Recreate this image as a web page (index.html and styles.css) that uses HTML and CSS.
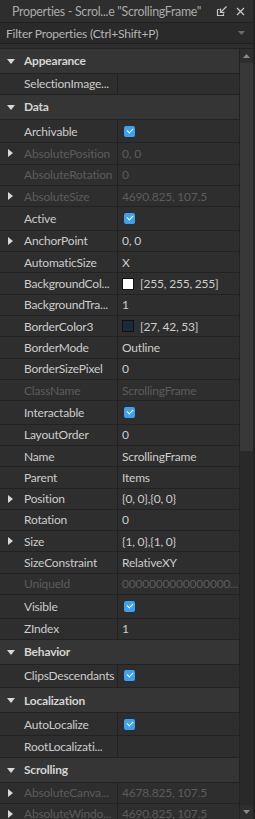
FILE: index.html
```html
<!DOCTYPE html>
<html lang="en">
<head>
    <meta charset="UTF-8">
    <title>Properties</title>
    <link rel="stylesheet" href="styles.css">
</head>
<body>
    <div class="panel">
        <div class="titlebar">
            <span class="title">Properties - Scrol...e "ScrollingFrame"</span>
            <svg class="tb-icon" width="12" height="12" viewBox="0 0 12 12">
                <path d="M1.5 4.5 V10.5 H7.5 V8.5 M1.5 4.5 H3.5" fill="none" stroke="#c8c8c8" stroke-width="1.2"/>
                <path d="M10.5 1.5 L5 7 M4.5 3.5 V7.5 H8.5" fill="none" stroke="#c8c8c8" stroke-width="1.2"/>
            </svg>
            <svg class="tb-icon" width="11" height="11" viewBox="0 0 11 11">
                <path d="M2 2 L9 9 M9 2 L2 9" stroke="#c8c8c8" stroke-width="1.3"/>
            </svg>
        </div>
        <div class="filter">
            <span>Filter Properties (Ctrl+Shift+P)</span>
            <svg width="7" height="4" viewBox="0 0 7 4"><path d="M0 0 H7 L3.5 4 Z" fill="#6a6a6a"/></svg>
        </div>
        <div class="body">
            <div class="list">
                <div class="group"><i class="down"></i>Appearance</div>
                <div class="row"><div class="name">SelectionImage...</div><div class="value"></div></div>

                <div class="group"><i class="down"></i>Data</div>
                <div class="row check"><div class="name">Archivable</div><div class="value"><b class="box"></b></div></div>
                <div class="row off"><div class="name"><i class="right"></i>AbsolutePosition</div><div class="value">0, 0</div></div>
                <div class="row off"><div class="name">AbsoluteRotation</div><div class="value">0</div></div>
                <div class="row off"><div class="name"><i class="right"></i>AbsoluteSize</div><div class="value">4690.825, 107.5</div></div>
                <div class="row check"><div class="name">Active</div><div class="value"><b class="box"></b></div></div>
                <div class="row"><div class="name"><i class="right"></i>AnchorPoint</div><div class="value">0, 0</div></div>
                <div class="row"><div class="name">AutomaticSize</div><div class="value">X</div></div>
                <div class="row"><div class="name">BackgroundCol...</div><div class="value"><b class="swatch white"></b>[255, 255, 255]</div></div>
                <div class="row"><div class="name">BackgroundTra...</div><div class="value">1</div></div>
                <div class="row"><div class="name">BorderColor3</div><div class="value"><b class="swatch navy"></b>[27, 42, 53]</div></div>
                <div class="row"><div class="name">BorderMode</div><div class="value">Outline</div></div>
                <div class="row"><div class="name">BorderSizePixel</div><div class="value">0</div></div>
                <div class="row off"><div class="name">ClassName</div><div class="value">ScrollingFrame</div></div>
                <div class="row check"><div class="name">Interactable</div><div class="value"><b class="box"></b></div></div>
                <div class="row"><div class="name">LayoutOrder</div><div class="value">0</div></div>
                <div class="row"><div class="name">Name</div><div class="value">ScrollingFrame</div></div>
                <div class="row"><div class="name">Parent</div><div class="value">Items</div></div>
                <div class="row"><div class="name"><i class="right"></i>Position</div><div class="value">{0, 0},{0, 0}</div></div>
                <div class="row"><div class="name">Rotation</div><div class="value">0</div></div>
                <div class="row"><div class="name"><i class="right"></i>Size</div><div class="value">{1, 0},{1, 0}</div></div>
                <div class="row"><div class="name">SizeConstraint</div><div class="value">RelativeXY</div></div>
                <div class="row off"><div class="name">UniqueId</div><div class="value">0000000000000000...</div></div>
                <div class="row check"><div class="name">Visible</div><div class="value"><b class="box"></b></div></div>
                <div class="row"><div class="name">ZIndex</div><div class="value">1</div></div>

                <div class="group"><i class="down"></i>Behavior</div>
                <div class="row check"><div class="name">ClipsDescendants</div><div class="value"><b class="box"></b></div></div>

                <div class="group"><i class="down"></i>Localization</div>
                <div class="row check"><div class="name">AutoLocalize</div><div class="value"><b class="box"></b></div></div>
                <div class="row"><div class="name">RootLocalizati...</div><div class="value"></div></div>

                <div class="group"><i class="down"></i>Scrolling</div>
                <div class="row off"><div class="name"><i class="right"></i>AbsoluteCanva...</div><div class="value">4678.825, 107.5</div></div>
                <div class="row off"><div class="name"><i class="right"></i>AbsoluteWindo...</div><div class="value">4690.825, 107.5</div></div>
            </div>
            <div class="scrollbar">
                <div class="arrow"><svg width="7" height="4" viewBox="0 0 7 4"><path d="M0 4 H7 L3.5 0 Z" fill="#8a8a8a"/></svg></div>
                <div class="thumb"></div>
                <div class="track"></div>
                <div class="arrow"><svg width="7" height="4" viewBox="0 0 7 4"><path d="M0 0 H7 L3.5 4 Z" fill="#8a8a8a"/></svg></div>
            </div>
        </div>
    </div>
</body>
</html>
```

FILE: styles.css
```css
body {
    margin: 0;
    background: #2e2e2e;
    font-family: Lato, "Open Sans", sans-serif;
    font-size: 12px;
    letter-spacing: -0.2px;
    color: #cccccc;
}
.panel {
    width: 255px;
    height: 819px;
    overflow: hidden;
    display: flex;
    flex-direction: column;
    background: #2e2e2e;
    border-right: 2px solid #232323;
    box-sizing: border-box;
}
.titlebar {
    height: 22px;
    display: flex;
    align-items: center;
    padding: 0 0 0 12px;
    color: #aaaaaa;
    font-size: 12.4px;
    letter-spacing: -0.3px;
}
.title {
    flex: 1;
    white-space: nowrap;
}
.tb-icon {
    margin-right: 7px;
}
.filter {
    height: 20px;
    margin: 0 0 4px;
    border-top: 1px solid #1f1f1f;
    border-bottom: 1px solid #1f1f1f;
    background: #2a2a2a;
    display: flex;
    align-items: center;
    justify-content: space-between;
    padding: 0 8px 0 6px;
    color: #b4b4b4;
}
.body {
    flex: 1;
    display: flex;
    border-top: 1px solid #222222;
    overflow: hidden;
}
.list {
    flex: 1;
}
.group {
    height: 24.8px;
    box-sizing: border-box;
    border-bottom: 1px solid #222222;
    background: #353535;
    display: flex;
    align-items: center;
    padding-left: 24px;
    font-weight: bold;
    color: #d4d4d4;
    position: relative;
}
.row {
    height: 21.3px;
    box-sizing: border-box;
    border-bottom: 1px solid #222222;
    display: grid;
    grid-template-columns: 118px 1fr;
}
.row.check {
    height: 23.5px;
}
.name, .value {
    display: flex;
    align-items: center;
    white-space: nowrap;
    overflow: hidden;
}
.name {
    padding-left: 24px;
    border-right: 1px solid #222222;
    position: relative;
}
.value {
    padding-left: 4px;
}
.off .name, .off .value {
    color: #5c5c5c;
}
i.down, i.right {
    position: absolute;
    width: 0;
    height: 0;
}
i.down {
    left: 7px;
    top: 10px;
    border-left: 4px solid transparent;
    border-right: 4px solid transparent;
    border-top: 5px solid #d8d8d8;
}
i.right {
    left: 8px;
    top: 6px;
    border-top: 4px solid transparent;
    border-bottom: 4px solid transparent;
    border-left: 5px solid #d8d8d8;
}
.box {
    width: 11px;
    height: 11px;
    margin-left: 2px;
    border-radius: 2px;
    background: #3ba1f2;
    position: relative;
}
.box::after {
    content: "";
    position: absolute;
    left: 3px;
    top: 2px;
    width: 5px;
    height: 3px;
    border-left: 1.5px solid #ffffff;
    border-bottom: 1.5px solid #ffffff;
    transform: rotate(-45deg);
}
.swatch {
    width: 10px;
    height: 10px;
    border: 1px solid #111111;
    margin-right: 6px;
}
.swatch.white {
    background: #ffffff;
}
.swatch.navy {
    background: #1b2a35;
}
.scrollbar {
    width: 13px;
    display: flex;
    flex-direction: column;
    background: #292929;
    border-left: 1px solid #222222;
}
.arrow {
    height: 14px;
    display: flex;
    align-items: center;
    justify-content: center;
    background: #2e2e2e;
}
.thumb {
    height: 388px;
    background: #383838;
}
.track {
    flex: 1;
}
```
